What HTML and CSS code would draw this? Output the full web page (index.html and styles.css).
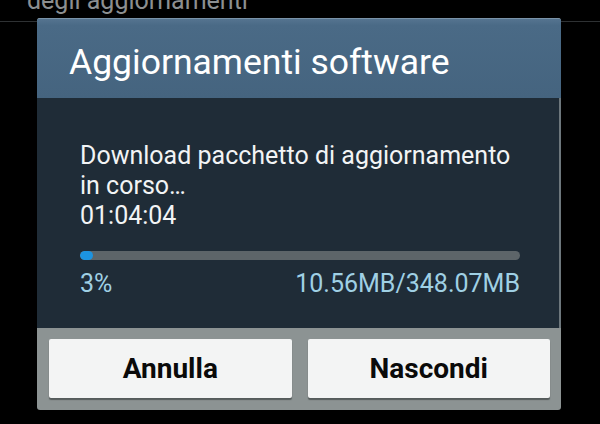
FILE: index.html
```html
<!DOCTYPE html>
<html lang="it">
<head>
<meta charset="utf-8">
<link rel="stylesheet" href="styles.css">
</head>
<body>
<div class="screen">
  <div class="list-item"><span class="list-text">degli aggiornamenti</span></div>
  <div class="dialog">
    <div class="dialog-header"><h1 class="dialog-title">Aggiornamenti software</h1></div>
    <div class="dialog-body">
      <p class="message">Download pacchetto di aggiornamento<br>in corso…<br>01:04:04</p>
      <div class="progress"><div class="progress-fill" style="width:3%"></div></div>
      <div class="progress-info"><span>3%</span><span>10.56MB/348.07MB</span></div>
    </div>
    <div class="dialog-buttons">
      <button class="btn">Annulla</button>
      <button class="btn">Nascondi</button>
    </div>
  </div>
</div>
</body>
</html>
```
FILE: styles.css
```css
html, body {
  margin: 0;
  padding: 0;
  background: #000;
}
.screen {
  position: relative;
  width: 600px;
  height: 424px;
  overflow: hidden;
  background: #000;
  font-family: Roboto, "Liberation Sans", sans-serif;
}
.list-item {
  height: 21px;
  border-bottom: 1px solid #2e3133;
  overflow: hidden;
  padding-left: 27px;
}
.list-text {
  display: block;
  margin-top: -14px;
  font-size: 25px;
  line-height: 30px;
  color: #8c8f91;
  white-space: nowrap;
}
.dialog {
  position: absolute;
  left: 37px;
  top: 18px;
  width: 524px;
  height: 392px;
  display: flex;
  flex-direction: column;
  border-radius: 3px;
  overflow: hidden;
  background: #8c9393;
}
.dialog-header {
  height: 80px;
  background: linear-gradient(#557490, #4a6a86 8%, #45647f);
  border-top: 1px solid #7a93a8;
  display: flex;
  align-items: center;
  padding-left: 32px;
  padding-top: 6px;
  box-sizing: border-box;
}
.dialog-title {
  margin: 0;
  font-weight: 400;
  font-size: 35.5px;
  color: #fff;
  letter-spacing: 0;
}
.dialog-body {
  height: 230px;
  background: #1f2c37;
  border-right: 2px solid #6d777c;
  padding: 43px 39px 0 43px;
  box-sizing: border-box;
}
.message {
  margin: 0;
  font-size: 25px;
  line-height: 30px;
  color: #f2f4f5;
}
.progress {
  margin-top: 20px;
  height: 9px;
  border-radius: 5px;
  background: #5d6569;
  overflow: hidden;
}
.progress-fill {
  height: 100%;
  background: #1c93e0;
  border-radius: 5px;
}
.progress-info {
  display: flex;
  justify-content: space-between;
  margin-top: 10px;
  font-size: 25px;
  line-height: 28px;
  color: #9fd0e4;
}
.dialog-buttons {
  flex: 1;
  display: flex;
  gap: 16px;
  padding: 11px 11px 0 12px;
  box-sizing: border-box;
}
.btn {
  flex: 1;
  height: 59px;
  border: none;
  border-radius: 2px;
  background: #f3f4f4;
  box-shadow: 0 2px 1px rgba(40, 45, 45, 0.55);
  font-family: Roboto, "Liberation Sans", sans-serif;
  font-weight: 700;
  font-size: 28px;
  color: #0a0a0a;
  padding: 0;
}
```
